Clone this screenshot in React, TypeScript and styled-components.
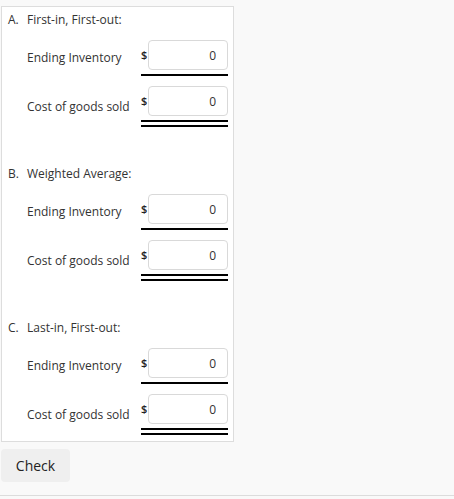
import React from "react";
import styled, { createGlobalStyle } from "styled-components";

const Global = createGlobalStyle`
  html, body {
    margin: 0;
    padding: 0;
    background: #f9f9f9;
  }
  body {
    font-family: "Open Sans", "Liberation Sans", Arial, sans-serif;
    color: #333;
  }
`;

const Page = styled.div`
  padding: 6px 0 0 1px;
  height: 496px;
  box-sizing: border-box;
  border-bottom: 1px solid #dcdcdc;
`;

const Panel = styled.div`
  width: 233px;
  box-sizing: border-box;
  background: #fff;
  border: 1px solid #dddddd;
  padding: 4px 0 6px 0;
`;

const Section = styled.div<{ $first?: boolean }>`
  margin-top: ${(p) => (p.$first ? 0 : 38)}px;
`;

const Header = styled.div`
  display: flex;
  font-size: 12px;
  line-height: 18px;
  padding-left: 6px;
`;

const Letter = styled.span`
  width: 19px;
  flex: none;
`;

const Row = styled.div<{ $gap: number }>`
  display: grid;
  grid-template-columns: 114px 80px;
  margin-top: ${(p) => p.$gap}px;
  padding-left: 25px;
`;

const Label = styled.div`
  font-size: 12px;
  line-height: 18px;
  align-self: center;
  white-space: nowrap;
`;

const Amount = styled.div`
  display: flex;
  flex-direction: column;
  width: 87px;
`;

const Field = styled.div`
  display: flex;
  align-items: flex-start;
`;

const Dollar = styled.span`
  width: 7px;
  font-size: 11px;
  font-weight: 600;
  line-height: 12px;
  margin-top: 9px;
  color: #222;
`;

const Input = styled.input`
  width: 80px;
  height: 30px;
  margin: 0;
  box-sizing: border-box;
  border: 1px solid #d9d9d9;
  border-radius: 4px;
  background: #fff;
  text-align: right;
  padding: 0 11px 0 4px;
  font-family: "Open Sans", "Liberation Sans", Arial, sans-serif;
  font-size: 12px;
  color: #333;
  outline: none;
`;

const Rule = styled.div<{ $double?: boolean }>`
  margin-top: 4px;
  height: ${(p) => (p.$double ? 3 : 0)}px;
  border-top: 2px solid #000;
  border-bottom: ${(p) => (p.$double ? "2px solid #000" : "none")};
`;

const CheckButton = styled.button`
  display: block;
  margin: 7px 0 0 0;
  width: 69px;
  height: 33px;
  border: none;
  border-radius: 4px;
  background: #efefef;
  font-family: "Open Sans", "Liberation Sans", Arial, sans-serif;
  font-size: 14px;
  color: #222;
  padding: 0;
  cursor: pointer;
`;

const sections = [
  { letter: "A.", title: "First-in, First-out:" },
  { letter: "B.", title: "Weighted Average:" },
  { letter: "C.", title: "Last-in, First-out:" },
];

export default function App() {
  return (
    <>
      <Global />
      <Page>
        <Panel>
          {sections.map((s, i) => (
            <Section key={s.letter} $first={i === 0}>
              <Header>
                <Letter>{s.letter}</Letter>
                <span>{s.title}</span>
              </Header>
              <Row $gap={11}>
                <Label>Ending Inventory</Label>
                <Amount>
                  <Field>
                    <Dollar>$</Dollar>
                    <Input defaultValue="0" />
                  </Field>
                  <Rule />
                </Amount>
              </Row>
              <Row $gap={10}>
                <Label>Cost of goods sold</Label>
                <Amount>
                  <Field>
                    <Dollar>$</Dollar>
                    <Input defaultValue="0" />
                  </Field>
                  <Rule $double />
                </Amount>
              </Row>
            </Section>
          ))}
        </Panel>
        <CheckButton>Check</CheckButton>
      </Page>
    </>
  );
}
